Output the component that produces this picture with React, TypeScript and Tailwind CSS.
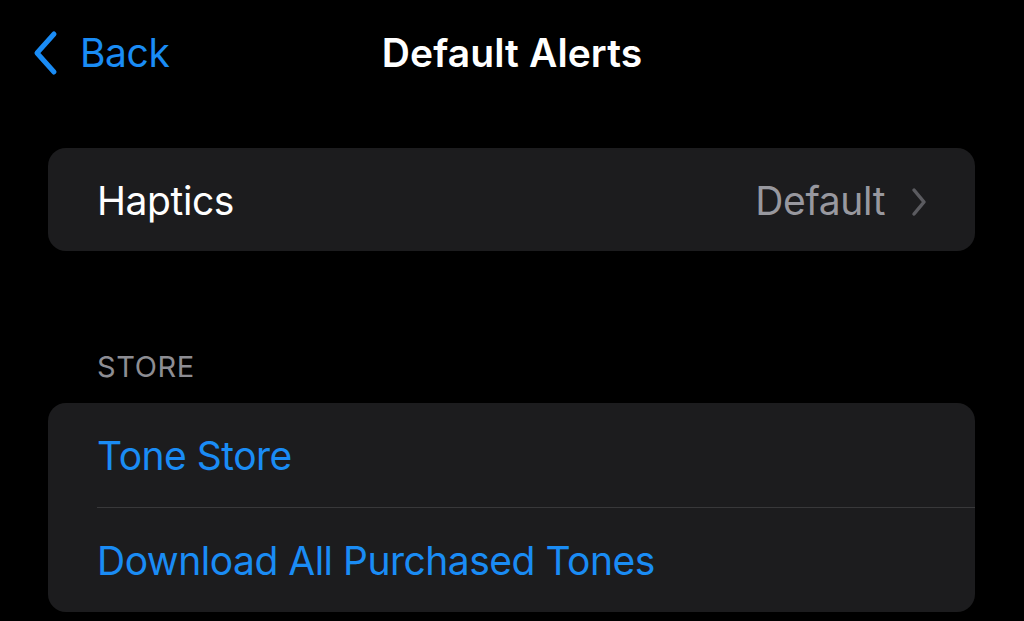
import React from "react"

const font = { fontFamily: "Inter, 'Noto Sans', 'Liberation Sans', sans-serif" }

function BackChevron() {
  return (
    <svg width="26" height="46" viewBox="0 0 26 46" fill="none">
      <path d="M22 4 L5 23 L22 42" stroke="#1a8cf5" strokeWidth="5" strokeLinecap="round" strokeLinejoin="round" />
    </svg>
  )
}

function Disclosure() {
  return (
    <svg width="16" height="30" viewBox="0 0 16 30" fill="none">
      <path d="M3 3 L13 15 L3 27" stroke="#5b5b60" strokeWidth="3.5" strokeLinecap="round" strokeLinejoin="round" />
    </svg>
  )
}

export default function App() {
  return (
    <div className="w-[1024px] h-[621px] bg-black overflow-hidden text-white" style={font}>
      {/* Barre de navigation */}
      <header className="h-[105px] grid grid-cols-[1fr_auto_1fr] items-center">
        <div className="flex items-center pl-[32px] gap-[22px] text-[#1a8cf5]">
          <BackChevron />
          <span className="text-[39px] leading-none tracking-[-0.4px]">Back</span>
        </div>
        <h1 className="text-[39px] leading-none font-semibold tracking-[0.1px]">Default Alerts</h1>
        <div />
      </header>

      <main className="px-[48px] pt-[43px] pr-[49px]">
        {/* Haptics */}
        <div className="h-[103px] rounded-[18px] bg-[#1c1c1e] flex items-center justify-between pl-[49px] pr-[48px] pt-[4px]">
          <span className="text-[39px] tracking-[-0.4px]">Haptics</span>
          <div className="flex items-center gap-[26px]">
            <span className="text-[39px] tracking-[-0.4px] text-[#98989f]">Default</span>
            <Disclosure />
          </div>
        </div>

        {/* Section Store */}
        <div className="pt-[98px] pb-[18px] pl-[49px] h-[152px] flex items-center">
          <span className="text-[29px] leading-[36px] text-[#8d8d93] tracking-[0.6px]">STORE</span>
        </div>

        <div className="rounded-[18px] bg-[#1c1c1e] overflow-hidden">
          <div className="h-[104px] flex items-center pl-[49px] pt-[2px]">
            <span className="text-[39px] tracking-[-0.5px] text-[#1a8cf5]">Tone Store</span>
          </div>
          <div className="ml-[49px] h-px bg-[#38383a]" />
          <div className="h-[104px] flex items-center pl-[49px] pt-[3px]">
            <span className="text-[39px] tracking-[-0.5px] text-[#1a8cf5]">Download All Purchased Tones</span>
          </div>
        </div>
      </main>
    </div>
  )
}
